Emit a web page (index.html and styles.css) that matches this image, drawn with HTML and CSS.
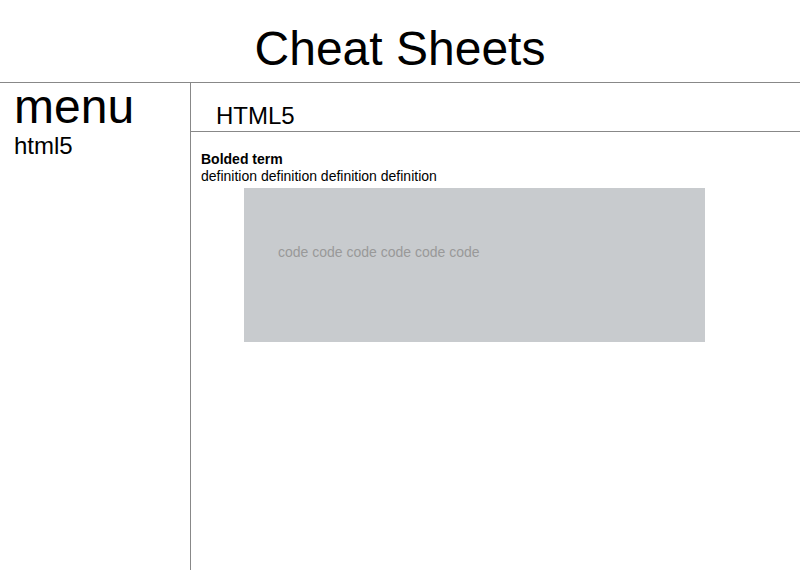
FILE: index.html
```html
<!DOCTYPE html>
<html>
<head>
<meta charset="utf-8">
<link rel="stylesheet" href="styles.css">
</head>
<body>
<header class="top">
  <h1 class="title">Cheat Sheets</h1>
</header>
<div class="layout">
  <aside class="menu">
    <div class="menu-title">menu</div>
    <div class="menu-item">html5</div>
  </aside>
  <main class="content">
    <h2 class="section-title">HTML5</h2>
    <dl class="entry">
      <dt class="term">Bolded term</dt>
      <dd class="definition">definition definition definition definition</dd>
      <dd class="code">code code code code code code</dd>
    </dl>
  </main>
</div>
</body>
</html>
```

FILE: styles.css
```css
html, body {
  margin: 0;
  padding: 0;
  background: #fff;
  color: #000;
  font-family: "Liberation Sans", Arial, sans-serif;
}

.top {
  height: 83px;
  box-sizing: border-box;
  padding-top: 21px;
  border-bottom: 1px solid #888;
}

.title {
  margin: 0;
  font-size: 48px;
  font-weight: normal;
  line-height: 55px;
  text-align: center;
}

.layout {
  display: flex;
  height: 487px;
}

.menu {
  width: 176px;
  flex: none;
  padding: 0 0 0 14px;
  border-right: 1px solid #888;
}

.menu-title {
  font-size: 48px;
  line-height: 48px;
}

.menu-item {
  font-size: 24px;
  margin-top: 1px;
}

.content {
  flex: 1;
}

.section-title {
  margin: 0;
  height: 49px;
  box-sizing: border-box;
  padding: 19px 0 0 25px;
  font-size: 24px;
  font-weight: normal;
  border-bottom: 1px solid #888;
}

.entry {
  margin: 0;
  padding: 19px 0 0 10px;
  font-size: 14px;
}

.term {
  font-weight: bold;
  line-height: 17px;
}

.definition {
  margin: 0;
  line-height: 17px;
}

.code {
  margin: 3px 0 0 43px;
  width: 427px;
  height: 98px;
  padding: 56px 0 0 34px;
  background: #c8cbce;
  color: #999;
  line-height: 16px;
}
```
